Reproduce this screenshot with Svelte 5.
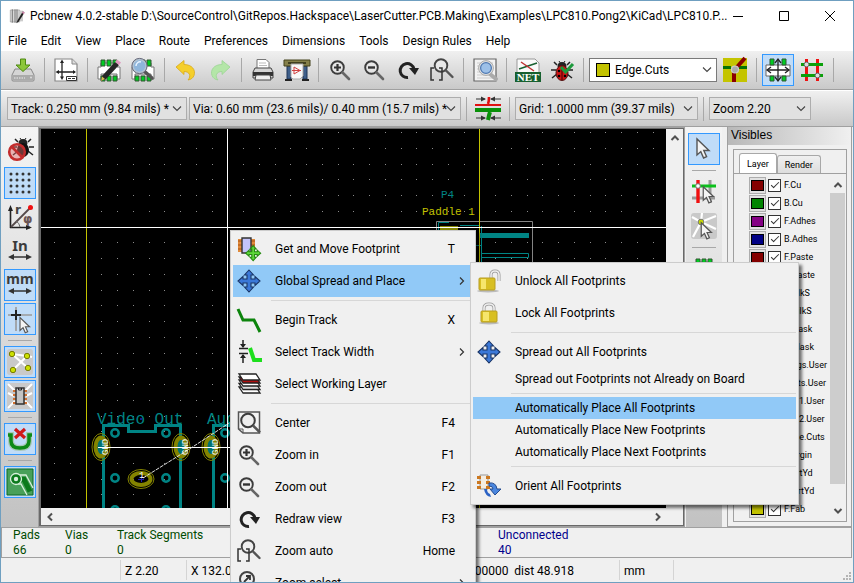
<script>
  const zoomGlass = '<circle cx="9.5" cy="9.5" r="6.3" fill="#eee" fill-opacity=".5" stroke="#3c3c3c" stroke-width="1.9"/><path d="M14.5 14.5l6.5 6.5" stroke="#666" stroke-width="2.6" stroke-linecap="round"/>';
  const chipGreen = '<path d="M1 9v12h3v-5h16v5h3V9h-3V5H4v4z" fill="#fff" stroke="#777"/><path d="M4 2h4v6H4zM10 2h4v6h-4zM16 2h4v6h-4zM4 18h4v5H4zM10 18h4v5h-4zM16 18h4v5h-4z" fill="#0c2" stroke="#353"/>';
  const cursor = '<path d="M5 2v16l3.800-3.400 2.800 6.400 3-1.300-2.800-6.200H17z" fill="#f4f4f4" stroke="#555" stroke-width="1.400"/>';
  const blueMove = '<path d="M12 1l4.500 5H14v4h4V7.500l5 4.500-5 4.500V14h-4v4h2.500L12 23l-4.500-5H10v-4H6v2.500L1 12l5-4.500V10h4V6H7.500z" fill="#3b78d8" stroke="#1b3565" stroke-width="1.100"/>';
  const redraw = '<path d="M12 19.500A7 7 0 1 1 18 11" fill="none" stroke="#222" stroke-width="3"/><path d="M13 10h10l-4 7z" fill="#222"/>';
  const beetle = '<path d="M7 7L4 4M17 7l3-3M6 12H1M18 12h5M7 16l-5 4M17 16l5 4" stroke="#222" stroke-width="1.500"/><path d="M9 3l2 3M15 3l-2 3" stroke="#222"/><ellipse cx="12" cy="8" rx="4.500" ry="4" fill="#222"/>';

  const icons = {
    pcb: '<path d="M2 3h14v18H2z" fill="#d8d8d8" stroke="#999"/><path d="M5 2v20M9 2v20M12 2v20" stroke="#777" stroke-width="1.500"/><path d="M14 4h7v16h-7z" fill="#ccc"/><path d="M21 5l-8 13-2 5 4-3 8-13z" fill="#222"/><path d="M20 6l3 2" stroke="#c8a" stroke-width="3"/>',
    save: '<path d="M4 11h16l3 6v5a1 1 0 0 1-1 1H2a1 1 0 0 1-1-1v-5z" fill="#d5d5d5" stroke="#888"/><path d="M1.500 17h21v5h-21z" fill="#aaa"/><path d="M3 20h11" stroke="#eee" stroke-dasharray="1.500 1"/><circle cx="20" cy="19.500" r="1" fill="#ddd"/><path d="M9.500 1h5v6h4.500l-7 6.500L5 7h4.500z" fill="#8cc63a" stroke="#4f8a12"/>',
    sheet: '<path d="M1 1h17l5 5v17H1z" fill="#fff" stroke="#888" stroke-width="1.200"/><path d="M18 1v5h5" fill="#ddd" stroke="#888"/><path d="M8 3v17M3 14h18" stroke="#222" stroke-width="1.300"/><path d="M8 1.500L6 5h4zM8 22l-2-3.500h4zM1.500 14L5 12v4zM22 14l-3-2v4z" fill="#222"/><path d="M12.500 18.500h10v4h-10z" fill="#fff" stroke="#333"/><path d="M14 20.500h3M18 20.500h3" stroke="#333"/>',
    fpedit: chipGreen + '<path d="M18 4l4 3L9 21l-5 2 1-5z" fill="#262626"/><path d="M18 4l2-2.500 4 3L22 7z" fill="#e09ac0"/><path d="M4 23l1-4.500 3 2.500z" fill="#d8b850"/>',
    fpview: chipGreen + '<path d="M13 13l8 7" stroke="#555" stroke-width="3.500" stroke-linecap="round"/><circle cx="8.500" cy="8" r="6.800" fill="#8fb6dc" stroke="#b4c4d2" stroke-width="2"/><circle cx="8.500" cy="8" r="7.600" fill="none" stroke="#667"/><path d="M5 8a4 4 0 0 1 5-4" stroke="#e6f2ff" stroke-width="1.500" fill="none"/>',
    undo: '<path d="M2 9l8-6.500v4c8 0 12 5.500 10 11-1 2.500-3 4-6 4.500 3.500-4 1.500-8.500-4-8.500v3z" fill="#f5cf2c" stroke="#d8a818" stroke-width=".8"/>',
    redo: '<path d="M22 9l-8-6.500v4c-8 0-12 5.500-10 11 1 2.500 3 4 6 4.500-3.500-4-1.500-8.500 4-8.500v3z" fill="#b4e6a8" stroke="#9cd494" stroke-width=".8"/>',
    print: '<path d="M6 11V1.500h9l3 3V11z" fill="#fff" stroke="#777"/><path d="M8 5h7M8 7.500h8" stroke="#bbb"/><path d="M4 10h16l2 4v6H2v-6z" fill="#d4d4d4" stroke="#444"/><path d="M2 14h20v4H2z" fill="#333"/><path d="M5 17h14l1 5H4z" fill="#eee" stroke="#444"/>',
    plot: '<path d="M2 8h4v13H2zM18 8h4v13h-4z" fill="#3f5f8a" stroke="#1f3556"/><path d="M-1 2h26v6H-1z" fill="#85804a" stroke="#45421c"/><path d="M3 5h18" stroke="#2b2b12" stroke-width="1.500"/><path d="M6 6h12v12l-3 3H8l-2-2z" fill="#f8f8f8" stroke="#aaa"/><path d="M9 9v7l6-3.500zM7 12.500h9" fill="none" stroke="#d04040"/><path d="M0 22h7M17 22h7" stroke="#222" stroke-width="2"/>',
    zoomin: zoomGlass + '<path d="M9.500 6v7M6 9.500h7" stroke="#333" stroke-width="2.200"/>',
    zoomout: zoomGlass + '<path d="M6 9.500h7" stroke="#333" stroke-width="2.400"/>',
    redraw,
    zoomauto: '<circle cx="11" cy="7.500" r="6.300" fill="#eee" fill-opacity=".5" stroke="#444" stroke-width="1.900"/><path d="M16 12.500l6.500 6.500" stroke="#555" stroke-width="2.400" stroke-linecap="round"/><path d="M4 10H1v12h3M9 10h3v12H9" fill="none" stroke="#333" stroke-width="1.500"/>',
    zoomselect: '<circle cx="10" cy="8" r="7" fill="#eee" stroke="#444" stroke-width="2"/><path d="M7 11l6-6M9 5h4v4" stroke="#333" stroke-width="1.800" fill="none"/><path d="M15 13l6 7" stroke="#555" stroke-width="2.500"/>',
    center: '<path d="M1.500 1h21v21H6l-4.500-4z" fill="#f4f4f4" stroke="#555" stroke-width="1.500"/><path d="M1.500 18H6v4" fill="none" stroke="#555"/><circle cx="11" cy="9.500" r="6.800" fill="#eee" stroke="#3d3d3d" stroke-width="2"/><path d="M16 14.500l7 7" stroke="#555" stroke-width="2.600"/>',
    find: '<path d="M1 1h22v22H1z" fill="#f2f2f2" stroke="#666" stroke-width="1.200"/><path d="M4 5h16M4 8h16M4 11h16M4 14h16M4 17h16M4 20h16" stroke="#ccc"/><path d="M17 16l6 5" stroke="#aaa" stroke-width="4" stroke-linecap="round"/><circle cx="13" cy="10" r="6.500" fill="#9cc0e8" stroke="#e4e4e4" stroke-width="2"/><circle cx="13" cy="10" r="5.400" fill="none" stroke="#4e78b0" stroke-width="1.200"/><circle cx="13" cy="10" r="7.400" fill="none" stroke="#999" stroke-width=".8"/>',
    net: '<path d="M1 1h18l4 4v17H1z" fill="#fafafa" stroke="#999"/><path d="M3 11l18-6" stroke="#186030" stroke-width="1.500"/><path d="M5 4l13 9" stroke="#c03030" stroke-width="1.500"/><path d="M-1 14h26v10H-1z" fill="#17602f"/><text x="12" y="23" text-anchor="middle" font-family="Liberation Serif, serif" font-weight="bold" font-size="11" fill="#fff">NET</text>',
    drc: beetle + '<ellipse cx="12" cy="15" rx="6" ry="7.500" fill="#cf1414" stroke="#501010"/><path d="M12 8v14" stroke="#400"/><circle cx="9" cy="13" r="1.300"/><circle cx="9" cy="18" r="1.300"/><circle cx="15" cy="18" r="1.300"/><path d="M11 9l4.500 5L23 6" fill="none" stroke="#1d9a3c" stroke-width="3"/>',
    layerpair: '<path d="M0 0h24v24H0z" fill="#c4c400"/><path d="M0 9.500h8M15 9.500h9" stroke="#067306" stroke-width="3"/><path d="M11 24V14M14 9l8-9" stroke="#8a0000" stroke-width="4" fill="none"/><circle cx="12" cy="11.500" r="3.500" fill="#aaa" stroke="#ccc" stroke-width="1.200"/>',
    modemod: '<path d="M0 7h24v11H0z" fill="#fff" stroke="#666"/><path d="M4 1h4v6H4zM16 1h4v6h-4zM4 18h4v5H4zM16 18h4v5h-4z" fill="#0c2" stroke="#353"/><path d="M12 1v22M2 12h20" stroke="#222" stroke-width="1.300"/><path d="M9 5l3-4 3 4M9 19l3 4 3-4M5 9l-4 3 4 3M19 9l4 3-4 3" fill="none" stroke="#222" stroke-width="1.300"/>',
    modetrack: '<path d="M6.500 1v22M17.500 1v22" stroke="#ee1010" stroke-width="3"/><path d="M1 6.500h22M1 17.500h22" stroke="#0aa00a" stroke-width="3"/><circle cx="6.500" cy="6.500" r="2.400" fill="#ddd" stroke="#666"/><circle cx="17.500" cy="17.500" r="2.400" fill="#ddd" stroke="#666"/>',
    autotrack: '<path d="M0 9h26" stroke="#e01010" stroke-width="2"/><path d="M0 14h26" stroke="#089008" stroke-width="4"/><path d="M13 8q1-3 1-7" fill="none" stroke="#e01010" stroke-width="2.600"/><path d="M15 16q-1 3-2 8" fill="none" stroke="#089008" stroke-width="4"/><path d="M1 3h9M16 3h10M1 22h9M16 22h10" stroke="#333"/><path d="M6 .5L11 3 6 5.500zM20 .5L15 3l5 2.500zM6 19.500l5 2.500-5 2.500zM20 19.500L15 22l5 2.500z" fill="#333"/>',
    drcoff: '<g transform="translate(3 -2)">' + beetle + '<ellipse cx="12" cy="15" rx="6" ry="7" fill="#111"/></g><circle cx="9" cy="15" r="7.800" fill="#d66" fill-opacity=".45" stroke="#c22c2c" stroke-width="2.600"/><path d="M3.500 9.500l11 11" stroke="#c22c2c" stroke-width="2.600"/>',
    grid: [3, 9, 15, 21].map((y) => [3, 9, 15, 21].map((x) => `<circle cx="${x}" cy="${y}" r="1.500" fill="#333"/>`).join('')).join(''),
    polar: '<path d="M2.500 23V3M2 22.500h20" stroke="#222" stroke-width="1.600"/><path d="M2.500 0L0 6h5zM24 22.500L18 20v5z" fill="#222"/><path d="M3 22L22 3" stroke="#554a4a" stroke-width="1.800"/><circle cx="22.500" cy="2.500" r="2.500" fill="#f01010"/><path d="M8 16a8 8 0 0 1 4 6" fill="none" stroke="#666"/><text x="7" y="9" font-family="DejaVu Sans, sans-serif" font-weight="bold" font-size="12" fill="#444">r</text><text x="15" y="18" font-family="DejaVu Sans, sans-serif" font-weight="bold" font-size="12" fill="#6a5555">φ</text>',
    inch: '<text x="12" y="12" text-anchor="middle" font-family="Noto Sans, sans-serif" font-weight="bold" font-size="15" fill="#3b3b3b">In</text><path d="M4 18h16" stroke="#333" stroke-width="1.500"/><path d="M0 18l6-3v6zM24 18l-6-3v6z" fill="#333"/>',
    mm: '<text x="12" y="11" text-anchor="middle" font-family="Noto Sans, sans-serif" font-weight="bold" font-size="14" fill="#3b3b3b">mm</text><path d="M4 18h16" stroke="#333" stroke-width="1.500"/><path d="M0 18l6-3v6zM24 18l-6-3v6z" fill="#333"/>',
    crosshair: '<path d="M8 0v24M0 8h24" stroke="#999" stroke-width="1.600"/><path d="M8 3v10M3 8h10" stroke="#222" stroke-width="2"/><g transform="translate(8 9) scale(.8)">' + cursor + '</g>',
    ratsnest: '<rect width="26" height="26" x="-1" y="-1" rx="3" fill="#c9c9c9"/><path d="M4 4l16 14M19 6L5 20M4 4l15 2 5 1" stroke="#fff" stroke-width="2.200"/><g fill="#cce000" stroke="#777b00"><circle cx="4" cy="4" r="2.700"/><circle cx="19" cy="6" r="2.700"/><circle cx="5" cy="20" r="2.700"/><circle cx="20" cy="18" r="2.700"/></g>',
    modrats: '<rect width="26" height="26" x="-1" y="-1" rx="3" fill="#c9c9c9"/><path d="M0 0l7 7M24 0l-7 7M0 24l7-7M24 24l-7-7M0 9l6 3M24 9l-6 3" stroke="#fff" stroke-width="2"/><path d="M5 7h14M5 11h14M5 15h14M5 19h14" stroke="#d07030" stroke-width="2"/><path d="M8 4h8v16H8z" fill="#c4c4c4" stroke="#333" stroke-width="1.500"/><path d="M10.500 4v2h3V4" fill="none" stroke="#222"/>',
    autodel: '<path d="M0 8h3v6q0 7 9 7t9-7V8h3" fill="none" stroke="#a9c8b8" stroke-width="6"/><path d="M0 8h3v6q0 7 9 7t9-7V8h3" fill="none" stroke="#0d8a16" stroke-width="3.500"/><path d="M7 2l10 9M17 2L7 11" stroke="#d01a1a" stroke-width="3.200"/>',
    zone: '<path d="M-1-1h26v26H-1z" fill="#48a05a" stroke="#0d6b22"/><path d="M8 5h10l7 13M8 14h5l6 11" fill="none" stroke="#d8f0dc" stroke-width="1.300"/><path d="M9 9.500h7l6 12" fill="none" stroke="#0b7a1c" stroke-width="5"/><circle cx="8" cy="9" r="5.500" fill="#0b7a1c" stroke="#d8f0dc" stroke-width="1.300"/><circle cx="8" cy="9" r="2.200" fill="#d8f0dc"/>',
    cursor,
    hilite: '<path d="M18 0v23M0 18h23" stroke="#999" stroke-width="3"/><path d="M6 0v23" stroke="#f01010" stroke-width="3.400"/><path d="M0 6h24" stroke="#0cc01c" stroke-width="3"/><circle cx="6" cy="6" r="2.300" fill="#fff" stroke="#777"/><g transform="translate(7 5) scale(.85)">' + cursor + '</g>',
    localrats: '<rect width="26" height="26" x="-1" y="-1" rx="3" fill="#c9c9c9"/><path d="M9 8L0 3M9 8l1-9M9 8l15-6M9 8L1 23M9 8l15 7" stroke="#fff" stroke-width="2.200"/><circle cx="9" cy="8" r="2.800" fill="#c8dc00" stroke="#777"/><g transform="translate(5 7) scale(.85)">' + cursor + '</g>',
    addmod: chipGreen,
    getmove: '<path d="M1 2h4v13H1zM14 2h4v13h-4z" fill="#e08a3c"/><path d="M1 4h17M1 8h17M1 12h17" stroke="#a85310"/><path d="M5 1h9v15H5z" fill="#c3c3fb" stroke="#333" stroke-width="1.400"/><g transform="translate(8 8) scale(.68)"><path d="M12 1l4.500 5H14v4h4V7.500l5 4.500-5 4.500V14h-4v4h2.500L12 23l-4.500-5H10v-4H6v2.500L1 12l5-4.500V10h4V6H7.500z" fill="#5fd83b" stroke="#268a12" stroke-width="1.600"/></g>',
    move: blueMove,
    track: '<path d="M1 1l5 11h11l6 12" fill="none" stroke="#0c840c" stroke-width="3"/>',
    trackwidth: '<path d="M6 0v7M2 8.500h9M2 13.500h9M6 15v8" stroke="#222" stroke-width="1.500"/><path d="M3 4l3 4 3-4zM3 18l3-4 3 4z" fill="#222"/><path d="M13 8l4 12h8" fill="none" stroke="#1ddf1d" stroke-width="4"/>',
    layers: '<g stroke="#222" stroke-width="1.300"><path d="M6 21L2 15h17l4 6z" fill="#fff"/><path d="M6 17.500L2 11.500h17l4 6z" fill="#ddd"/><path d="M6 14L2 8h17l4 6z" fill="#fff"/><path d="M6 11L2 5h17l4 6z" fill="#b01010"/><path d="M6 8L2 2h17l4 6z" fill="#fff"/></g>',
    unlock: '<ellipse cx="11" cy="22" rx="11" ry="1.500" fill="#bbb"/><path d="M14 10V6q0-4 4-4t4 4v6" fill="none" stroke="#999" stroke-width="3"/><path d="M14 10V6q0-4 4-4t4 4v6" fill="none" stroke="#eee" stroke-width="1.600"/><rect x="2" y="9" width="16" height="12" rx="1" fill="#d8bf22" stroke="#b89d20"/><path d="M4 10h5v10H4z" fill="#f6e66c"/>',
    lock: '<ellipse cx="12" cy="22" rx="10" ry="1.500" fill="#bbb"/><path d="M7 11V7q0-4 5-4t5 4v4" fill="none" stroke="#999" stroke-width="3"/><path d="M7 11V7q0-4 5-4t5 4v4" fill="none" stroke="#eee" stroke-width="1.600"/><rect x="4" y="10" width="16" height="11" rx="1" fill="#d8bf22" stroke="#b89d20"/><path d="M6 11h6v9H6z" fill="#f6e66c"/>',
    orient: '<path d="M3 1h8v14H3z" fill="#f4ede2" stroke="#999"/><path d="M0 2h4v3H0zM0 7h4v3H0zM0 12h4v3H0zM9 2h4v3H9zM9 7h4v3H9zM9 12h4v3H9z" fill="#cc7820"/><path d="M12 9q7-1 8 6h4l-6 6-5-6h3q0-3-4-3z" fill="#4a86de" stroke="#234b90"/><path d="M7 15q1 7 7 8l-1-3q-3-1-3-5z" fill="#2b62c4"/>'
  };

  const titlePath = 'Pcbnew 4.0.2-stable D:\\SourceControl\\GitRepos.Hackspace\\LaserCutter.PCB.Making\\Examples\\LPC810.Pong2\\KiCad\\LPC810.P...';
  const menus = ['File', 'Edit', 'View', 'Place', 'Route', 'Preferences', 'Dimensions', 'Tools', 'Design Rules', 'Help'];

  const mainTools = [
    { i: 'save', t: 'Save board' }, null,
    { i: 'sheet', t: 'Page settings' }, null,
    { i: 'fpedit', t: 'Open footprint editor' }, { i: 'fpview', t: 'Open footprint viewer' }, null,
    { i: 'undo', t: 'Undo' }, { i: 'redo', t: 'Redo' }, null,
    { i: 'print', t: 'Print board' }, { i: 'plot', t: 'Plot' }, null,
    { i: 'zoomin', t: 'Zoom in' }, { i: 'zoomout', t: 'Zoom out' }, { i: 'redraw', t: 'Redraw view' }, { i: 'zoomauto', t: 'Zoom auto' }, null,
    { i: 'find', t: 'Find' }, null,
    { i: 'net', t: 'Read netlist' }, { i: 'drc', t: 'Design rules check' }, null
  ];
  const modeTools = [
    { i: 'layerpair', t: 'Select layer pair' }, null,
    { i: 'modemod', t: 'Mode footprint', on: true }, { i: 'modetrack', t: 'Mode track' }, null
  ];
  const leftTools = [
    { i: 'drcoff', t: 'Disable DRC' }, { i: 'grid', t: 'Show grid', on: true }, { i: 'polar', t: 'Polar coordinates' },
    { i: 'inch', t: 'Units in inches' }, { i: 'mm', t: 'Units in millimeters', on: true }, { i: 'crosshair', t: 'Cursor shape', on: true }, null,
    { i: 'ratsnest', t: 'Show board ratsnest', on: true }, { i: 'modrats', t: 'Show footprint ratsnest', on: true }, null,
    { i: 'autodel', t: 'Automatic track deletion', on: true }, null,
    { i: 'zone', t: 'Show filled zones', on: true }
  ];
  const rightTools = [
    { i: 'cursor', t: 'Select', on: true }, null,
    { i: 'hilite', t: 'Highlight net' }, { i: 'localrats', t: 'Local ratsnest' }, null,
    { i: 'addmod', t: 'Add footprint' }
  ];

  const layers = [
    ['F.Cu', '#840000'], ['B.Cu', '#008400'], ['F.Adhes', '#840084'], ['B.Adhes', '#000084'],
    ['F.Paste', '#840000'], ['B.Paste', '#00c2c2'], ['F.SilkS', '#008484'], ['B.SilkS', '#840084'],
    ['F.Mask', '#840084'], ['B.Mask', '#848400'], ['Dwgs.User', '#c2c2c2'], ['Cmts.User', '#000084'],
    ['Eco1.User', '#008400'], ['Eco2.User', '#c2c200'], ['Edge.Cuts', '#c2c200'], ['Margin', '#c200c2'],
    ['F.CrtYd', '#848484'], ['B.CrtYd', '#000000'], ['F.Fab', '#c2c200']
  ];

  const contextItems = [
    { i: 'getmove', t: 'Get and Move Footprint', k: 'T' },
    { i: 'move', t: 'Global Spread and Place', sub: true, on: true }, null,
    { i: 'track', t: 'Begin Track', k: 'X' },
    { i: 'trackwidth', t: 'Select Track Width', sub: true },
    { i: 'layers', t: 'Select Working Layer' }, null,
    { i: 'center', t: 'Center', k: 'F4' },
    { i: 'zoomin', t: 'Zoom in', k: 'F1' },
    { i: 'zoomout', t: 'Zoom out', k: 'F2' },
    { i: 'redraw', t: 'Redraw view', k: 'F3' },
    { i: 'zoomauto', t: 'Zoom auto', k: 'Home' },
    { i: 'zoomselect', t: 'Zoom select', sub: true }
  ];
  const spreadItems = [
    { i: 'unlock', t: 'Unlock All Footprints' }, { i: 'lock', t: 'Lock All Footprints' }, null,
    { i: 'move', t: 'Spread out All Footprints' }, { t: 'Spread out Footprints not Already on Board' }, null,
    { t: 'Automatically Place All Footprints', on: true }, { t: 'Automatically Place New Footprints' },
    { t: 'Automatically Place Next Footprints' }, null,
    { i: 'orient', t: 'Orient All Footprints' }
  ];

  let dots = '';
  for (let r = 0; r < 24; r++)
    for (let c = 0; c < 40; c++)
      dots += `M${Math.floor(13.5 + c * 15.75)} ${Math.floor(3.5 + r * 15.75)}h1v1h-1z`;
</script>

{#snippet icon(name)}
  <svg class="icon" viewBox="0 0 24 24" aria-hidden="true">{@html icons[name]}</svg>
{/snippet}

{#snippet tools(list)}
  {#each list as tool}
    {#if tool}
      <button class="tool" class:on={tool.on} aria-label={tool.t}>{@render icon(tool.i)}</button>
    {:else}
      <span class="sep"></span>
    {/if}
  {/each}
{/snippet}

{#snippet combo(label, text, cls)}
  <span class="combo {cls}">
    <select aria-label={label}><option>{text}</option></select>
    <svg viewBox="0 0 10 6" aria-hidden="true"><path d="M1 .5l4 4 4-4" fill="none" stroke="#444" stroke-width="1.100" /></svg>
  </span>
{/snippet}

{#snippet arrow(dir, label)}
  <button class="arrow" aria-label={label}>
    <svg class="tip-{dir}" viewBox="0 0 10 10" aria-hidden="true"><path d="M1.500 7L5 3.500 8.500 7" fill="none" stroke="#505050" stroke-width="2" /></svg>
  </button>
{/snippet}

{#snippet popup(items)}
  {#each items as item}
    {#if item}
      <button role="menuitem" class="item" class:tall={item.i} class:on={item.on}>
        <span class="gutter">{#if item.i}{@render icon(item.i)}{/if}</span>
        <span class="caption">{item.t}</span>
        {#if item.k}<span class="key">{item.k}</span>{/if}
        {#if item.sub}
          <svg class="more" viewBox="0 0 6 8" aria-hidden="true"><path d="M1 .5L4.500 4 1 7.500" fill="none" stroke="#333" stroke-width="1.200" /></svg>
        {/if}
      </button>
    {:else}
      <div class="rule" role="separator"></div>
    {/if}
  {/each}
{/snippet}

<div class="window">
  <header class="title">
    {@render icon('pcb')}
    <h1>{titlePath}</h1>
    <div class="controls">
      <button aria-label="Minimize"><svg viewBox="0 0 12 12"><path d="M1 6.500h10" /></svg></button>
      <button aria-label="Maximize"><svg viewBox="0 0 12 12"><path d="M1.500 1.500h9v9h-9z" /></svg></button>
      <button aria-label="Close"><svg viewBox="0 0 12 12"><path d="M1 1l10 10M11 1L1 11" /></svg></button>
    </div>
  </header>

  <nav class="menubar">
    {#each menus as m}<button>{m}</button>{/each}
  </nav>

  <div class="toolbar main">
    {@render tools(mainTools)}
    <span class="layerpick"><i></i>{@render combo('Layer', 'Edge.Cuts', 'layer')}</span>
    {@render tools(modeTools)}
  </div>

  <div class="toolbar options">
    {@render combo('Track width', 'Track: 0.250 mm (9.84 mils) *', 'w-track')}
    {@render combo('Via size', 'Via: 0.60 mm (23.6 mils)/ 0.40 mm (15.7 mils) *', 'w-via')}
    <span class="sep"></span>
    <button class="tool" aria-label="Auto track width"><svg class="icon wide" viewBox="0 0 26 26" aria-hidden="true">{@html icons.autotrack}</svg></button>
    <span class="sep"></span>
    {@render combo('Grid', 'Grid: 1.0000 mm (39.37 mils)', 'w-grid')}
    <span class="sep"></span>
    {@render combo('Zoom', 'Zoom 2.20', 'w-zoom')}
  </div>

  <main class="work">
    <div class="side left">{@render tools(leftTools)}</div>

    <section class="view">
      <svg class="board" viewBox="41 129 625 379" preserveAspectRatio="xMinYMin slice" role="img" aria-label="Board">
        <path transform="translate(41 129)" d={dots} fill="#8c8c8c" shape-rendering="crispEdges" />
        <g fill="none" stroke="#008484" stroke-width="3">
          <path d="M103.500 508V425.500H128.500V431.500H155.500V425.500H180.500V508" />
          <path d="M213.500 508V425.500H240" />
          <g stroke-width="2.500">
            {#each [[115, 433], [166, 433], [115, 478], [166, 478], [115, 510], [166, 510], [225, 433], [225, 478]] as [x, y]}
              <circle cx={x} cy={y} r="3.700" />
            {/each}
          </g>
        </g>
        {#each [101, 181, 211] as x}
          <ellipse cx={x} cy="447" rx="9" ry="13.500" fill="none" stroke="#848400" />
          <ellipse cx={x} cy="447" rx="7.500" ry="11.500" fill="#848400" />
          <ellipse cx={x} cy="447" rx="3.500" ry="7" fill="#007070" />
        {/each}
        <ellipse cx="141" cy="479" rx="13" ry="9.500" fill="none" stroke="#848400" />
        <ellipse cx="141" cy="479" rx="9.500" ry="6" fill="none" stroke="#848400" stroke-width="4" />
        <path d="M98 447.500H240" stroke="#fff" />
        <path d="M143 478L191 448 240 416" stroke="#ddd" fill="none" stroke-dasharray="4 1" />
        <path d="M138 479.500h6M141.500 476v6" stroke="#2020b0" />
        <circle cx="141" cy="419" r="1" fill="#2020c0" />
        <g class="netname">
          <text transform="translate(108 455) rotate(-90)">GND</text>
          <text transform="translate(188 455) rotate(-90)">GND</text>
          <text transform="translate(218 455) rotate(-90)">GND</text>
          <text x="139" y="478">1</text>
        </g>
        <g class="silk">
          <text x="97" y="424">Video Out</text>
          <text x="207" y="424">Audio</text>
          <text class="small" x="441" y="198">P4</text>
          <text class="small value" x="422" y="215">Paddle 1</text>
        </g>
        <g fill="none" stroke="#008484">
          <path d="M438.500 240V222.500H449M460 225.500H480M476 245.500h5M481.500 226V265" />
          <path d="M481.500 253.500h47v4h-47z" />
        </g>
        <path d="M480 233h49v5h-49z" fill="#008484" />
        <path d="M440 226h18v6h-18z" fill="#848400" />
        <path d="M436.500 270V221.500h96V270" fill="none" stroke="#848484" />
        <path d="M86.500 129V800M479.500 129V800" stroke="#c2c200" />
        <path d="M41 227.500H2000M227.500 129V800" stroke="#fff" />
      </svg>
      <div class="vscroll">{@render arrow('up', 'Scroll up')}</div>
      <div class="hscroll">{@render arrow('left', 'Scroll left')}{@render arrow('right', 'Scroll right')}</div>
    </section>

    <div class="side right">{@render tools(rightTools)}</div>

    <aside class="visibles">
      <h2>Visibles</h2>
      <div class="book">
        <div class="tabs" role="tablist">
          <button role="tab" aria-selected="true">Layer</button>
          <button role="tab" aria-selected="false">Render</button>
        </div>
        <div class="list">
          <ul>
            {#each layers as [name, color]}
              <li>
                <button class="swatch" aria-label="{name} color"><i style="background:{color}"></i></button>
                <label><input type="checkbox" checked />{name}</label>
              </li>
            {/each}
          </ul>
          <div class="lscroll">{@render arrow('up', 'Up')}<i></i>{@render arrow('down', 'Down')}</div>
        </div>
      </div>
    </aside>
  </main>

  <dl class="info">
    <div class="i1"><dt>Pads</dt><dd>66</dd></div>
    <div class="i1"><dt>Vias</dt><dd>0</dd></div>
    <div class="i2"><dt>Track Segments</dt><dd>0</dd></div>
    <div class="blue"><dt>Unconnected</dt><dd>40</dd></div>
  </dl>

  <footer class="status">
    <span class="s0"></span>
    <span class="s1">Z 2.20</span>
    <span class="s2">X 132.000000</span>
    <span class="s3">dy 9.000000&nbsp; dist 48.918</span>
    <span class="s4">mm</span>
    <span class="s5"></span>
    <svg class="grip" viewBox="0 0 8 8" aria-hidden="true"><path d="M6 0h2v2H6zM3 3h2v2H3zM6 3h2v2H6zM0 6h2v2H0zM3 6h2v2H3zM6 6h2v2H6z" fill="#b4b4b4" /></svg>
  </footer>

  <div class="popup context" role="menu" aria-label="Board">{@render popup(contextItems)}</div>
  <div class="popup spread" role="menu" aria-label="Global Spread and Place">{@render popup(spreadItems)}</div>
</div>

<style>
  :global(body) { margin: 0; overflow: hidden; }
  .window {
    position: relative; box-sizing: border-box; display: flex; flex-direction: column;
    height: 100vh; overflow: hidden; border: 1px solid #6f9fc0; background: #f0f0f0;
    font: 12px/16px Roboto, "Noto Sans", sans-serif; color: #000;
  }
  button { font: inherit; color: inherit; padding: 0; border: 0; background: none; }
  .icon { display: block; width: 24px; height: 24px; flex: none; overflow: visible; }
  h1, h2, dl, dd, ul { margin: 0; padding: 0; font: inherit; }

  .title { display: flex; align-items: center; height: 30px; flex: none; background: #fff; padding-left: 8px; }
  .title .icon { width: 16px; height: 16px; }
  .title h1 { flex: 1; min-width: 0; margin-left: 5px; white-space: nowrap; }
  .controls { display: flex; }
  .controls button { width: 46px; height: 28px; display: grid; place-items: center; }
  .controls svg { width: 12px; height: 12px; fill: none; stroke: #000; }

  .menubar { display: flex; gap: 14px; align-items: center; height: 20px; flex: none; padding: 0 7px; background: #fff; }

  .toolbar {
    display: flex; align-items: center; gap: 2px; flex: none; box-sizing: border-box; padding-left: 6px;
    background: linear-gradient(#f0f0f0, #c9c9c9); border-bottom: 1px solid #a0a0a0;
  }
  .main { height: 39px; }
  .options { height: 37px; border-top: 1px solid #fff; }
  .tool { box-sizing: border-box; width: 32px; height: 32px; flex: none; display: grid; place-items: center; border: 1px solid transparent; }
  .tool.on { background: #c0dcf8; border-color: #3399ff; }
  .icon.wide { width: 28px; height: 26px; }
  .sep { flex: none; width: 1px; height: 24px; margin: 0 3px; background: #a8a8a8; }

  .combo { display: grid; grid-template-columns: 1fr 20px; align-items: center; }
  .combo select {
    grid-area: 1 / 1 / 2 / 3; appearance: none; box-sizing: border-box; width: 100%; height: 23px; margin: 0; padding: 0 12px 0 3px;
    border: 1px solid #adadad; border-radius: 0; background: #e1e1e1; font: inherit; color: #000;
  }
  .combo svg { grid-area: 1 / 2; width: 10px; height: 6px; justify-self: center; pointer-events: none; }
  .w-track { width: 180px; }
  .w-via { width: 272px; }
  .w-grid { width: 183px; }
  .w-zoom { width: 102px; }
  .layerpick { display: grid; align-items: center; width: 128px; }
  .layerpick > :global(*) { grid-area: 1 / 1; }
  .layerpick i { z-index: 1; width: 12px; height: 12px; margin-left: 7px; background: #c2c200; border: 1px solid #000; pointer-events: none; }
  .layer select { height: 24px; padding-left: 25px; background: #fff; border-color: #7a7a7a; }

  .work { flex: 1; min-height: 0; display: flex; }
  .side { display: flex; flex-direction: column; align-items: center; gap: 2px; flex: none; box-sizing: border-box; padding-top: 6px; background: linear-gradient(#f4f4f4, #c2c2c2); overflow: hidden; }
  .side .sep { width: 24px; height: 1px; margin: 3px 0; }
  .left { width: 37px; }
  .right { width: 36px; margin: 0 5px 0 1px; }

  .view {
    flex: 1; min-width: 0; display: grid; grid-template: 1fr 17px / 1fr 17px;
    border: solid #696969; border-width: 1px 1px 1px 2px; outline: 1px solid #a0a0a0; margin: 1px;
  }
  .board { grid-area: 1 / 1; width: 100%; height: 100%; min-height: 0; background: #000; }
  .silk { font: 16px "Liberation Mono", monospace; fill: #008484; }
  .small { font-size: 11px; }
  .value { fill: #c2c200; }
  .netname { font: 9px "Liberation Mono", monospace; fill: #fff; }
  .vscroll, .hscroll { display: flex; background: #f0f0f0; }
  .vscroll { grid-area: 1 / 2; flex-direction: column; }
  .hscroll { grid-area: 2 / 1; justify-content: space-between; }
  .arrow { width: 17px; height: 17px; flex: none; display: grid; place-items: center; }
  .arrow svg { width: 10px; height: 10px; }
  .tip-left { transform: rotate(-90deg); }
  .tip-right { transform: rotate(90deg); }
  .tip-down { transform: rotate(180deg); }

  .visibles { width: 125px; flex: none; box-sizing: border-box; display: flex; flex-direction: column; border: 1px solid #a0a0a0; border-top: 0; margin-right: 1px; }
  .visibles h2 { height: 18px; flex: none; padding-left: 3px; font: 12px/16px "Liberation Sans", sans-serif; background: linear-gradient(90deg, #b8b8b8, #f0f0f0); }
  .book { flex: 1; min-height: 0; margin: 4px 4px 4px 5px; border: 1px solid #a0a0a0; display: flex; flex-direction: column; font-size: 9px; }
  .tabs { display: flex; flex: none; height: 24px; box-sizing: border-box; align-items: flex-end; padding-left: 5px; border-bottom: 1px solid #a0a0a0; }
  .tabs button { height: 18px; padding: 0 7px; border: 1px solid #a8a8a8; border-bottom: 0; border-radius: 3px 3px 0 0; line-height: 16px; background: linear-gradient(#f0f0f0, #ddd); }
  .tabs button[aria-selected="true"] { height: 20px; background: #fff; }
  .list { flex: 1; min-height: 0; display: flex; padding: 2px 1px 2px 15px; }
  .list ul { flex: 1; min-width: 0; list-style: none; overflow: hidden; }
  .list li { display: flex; align-items: center; height: 18px; }
  .swatch { width: 17px; height: 17px; box-sizing: border-box; flex: none; border: 1px solid #adadad; background: #e1e1e1; display: grid; place-items: center; }
  .swatch i { width: 11px; height: 9px; border: 1px solid #000; }
  .list label { display: flex; align-items: center; gap: 3px; margin-left: 2px; white-space: nowrap; }
  .list input { appearance: none; box-sizing: border-box; width: 13px; height: 13px; margin: 0; flex: none; border: 1px solid #333; background: #fff; display: grid; place-items: center; }
  .list input::before { content: ""; width: 7px; height: 3px; margin-bottom: 3px; border: solid #333; border-width: 0 0 1px 1px; transform: rotate(-45deg); }
  .lscroll { width: 15px; flex: none; display: flex; flex-direction: column; }
  .lscroll i { flex: 1; background: #cdcdcd; margin-bottom: 18px; }
  .lscroll .arrow { width: 15px; }

  .info { display: flex; flex: none; height: 31px; box-sizing: border-box; padding-left: 11px; border: 1px solid #a0a0a0; margin: 0 1px 0 0; color: #004b00; line-height: 15px; }
  .info .i1 { width: 52px; }
  .info .i2 { flex: 0 0 381px; }
  .info .blue { color: #00008c; }

  .status { display: flex; flex: none; height: 24px; box-sizing: border-box; padding: 2px 0; line-height: 22px; white-space: nowrap; }
  .status span { box-sizing: border-box; padding-left: 4px; border-right: 1px solid #d4d4d4; }
  .s0 { width: 120px; }
  .s1 { width: 66px; }
  .s2 { width: 233px; }
  .status .s3 { width: 200px; padding-right: 45px; text-align: right; }
  .s4 { width: 54px; }
  .status .s5 { flex: 1; border: 0; }
  .grip { width: 8px; height: 8px; align-self: flex-end; margin: 0 2px 0 0; }

  .popup { position: absolute; box-sizing: border-box; padding: 2px; background: #f0f0f0; border: 1px solid #ccc; box-shadow: 3px 3px 3px rgba(0, 0, 0, .55); }
  .context { left: 229px; top: 229px; width: 246px; }
  .spread { left: 469px; top: 261px; width: 329px; }
  .item { display: flex; align-items: center; width: 100%; height: 22px; text-align: left; }
  .item.tall { height: 32px; }
  .item.on { background: #91c9f7; }
  .gutter { width: 42px; flex: none; padding-left: 4px; box-sizing: border-box; }
  .caption { flex: 1; white-space: nowrap; }
  .key { padding-right: 18px; }
  .more { width: 6px; height: 8px; margin-right: 8px; }
  .rule { height: 1px; margin: 3px 0 3px 38px; background: #d7d7d7; }
</style>
